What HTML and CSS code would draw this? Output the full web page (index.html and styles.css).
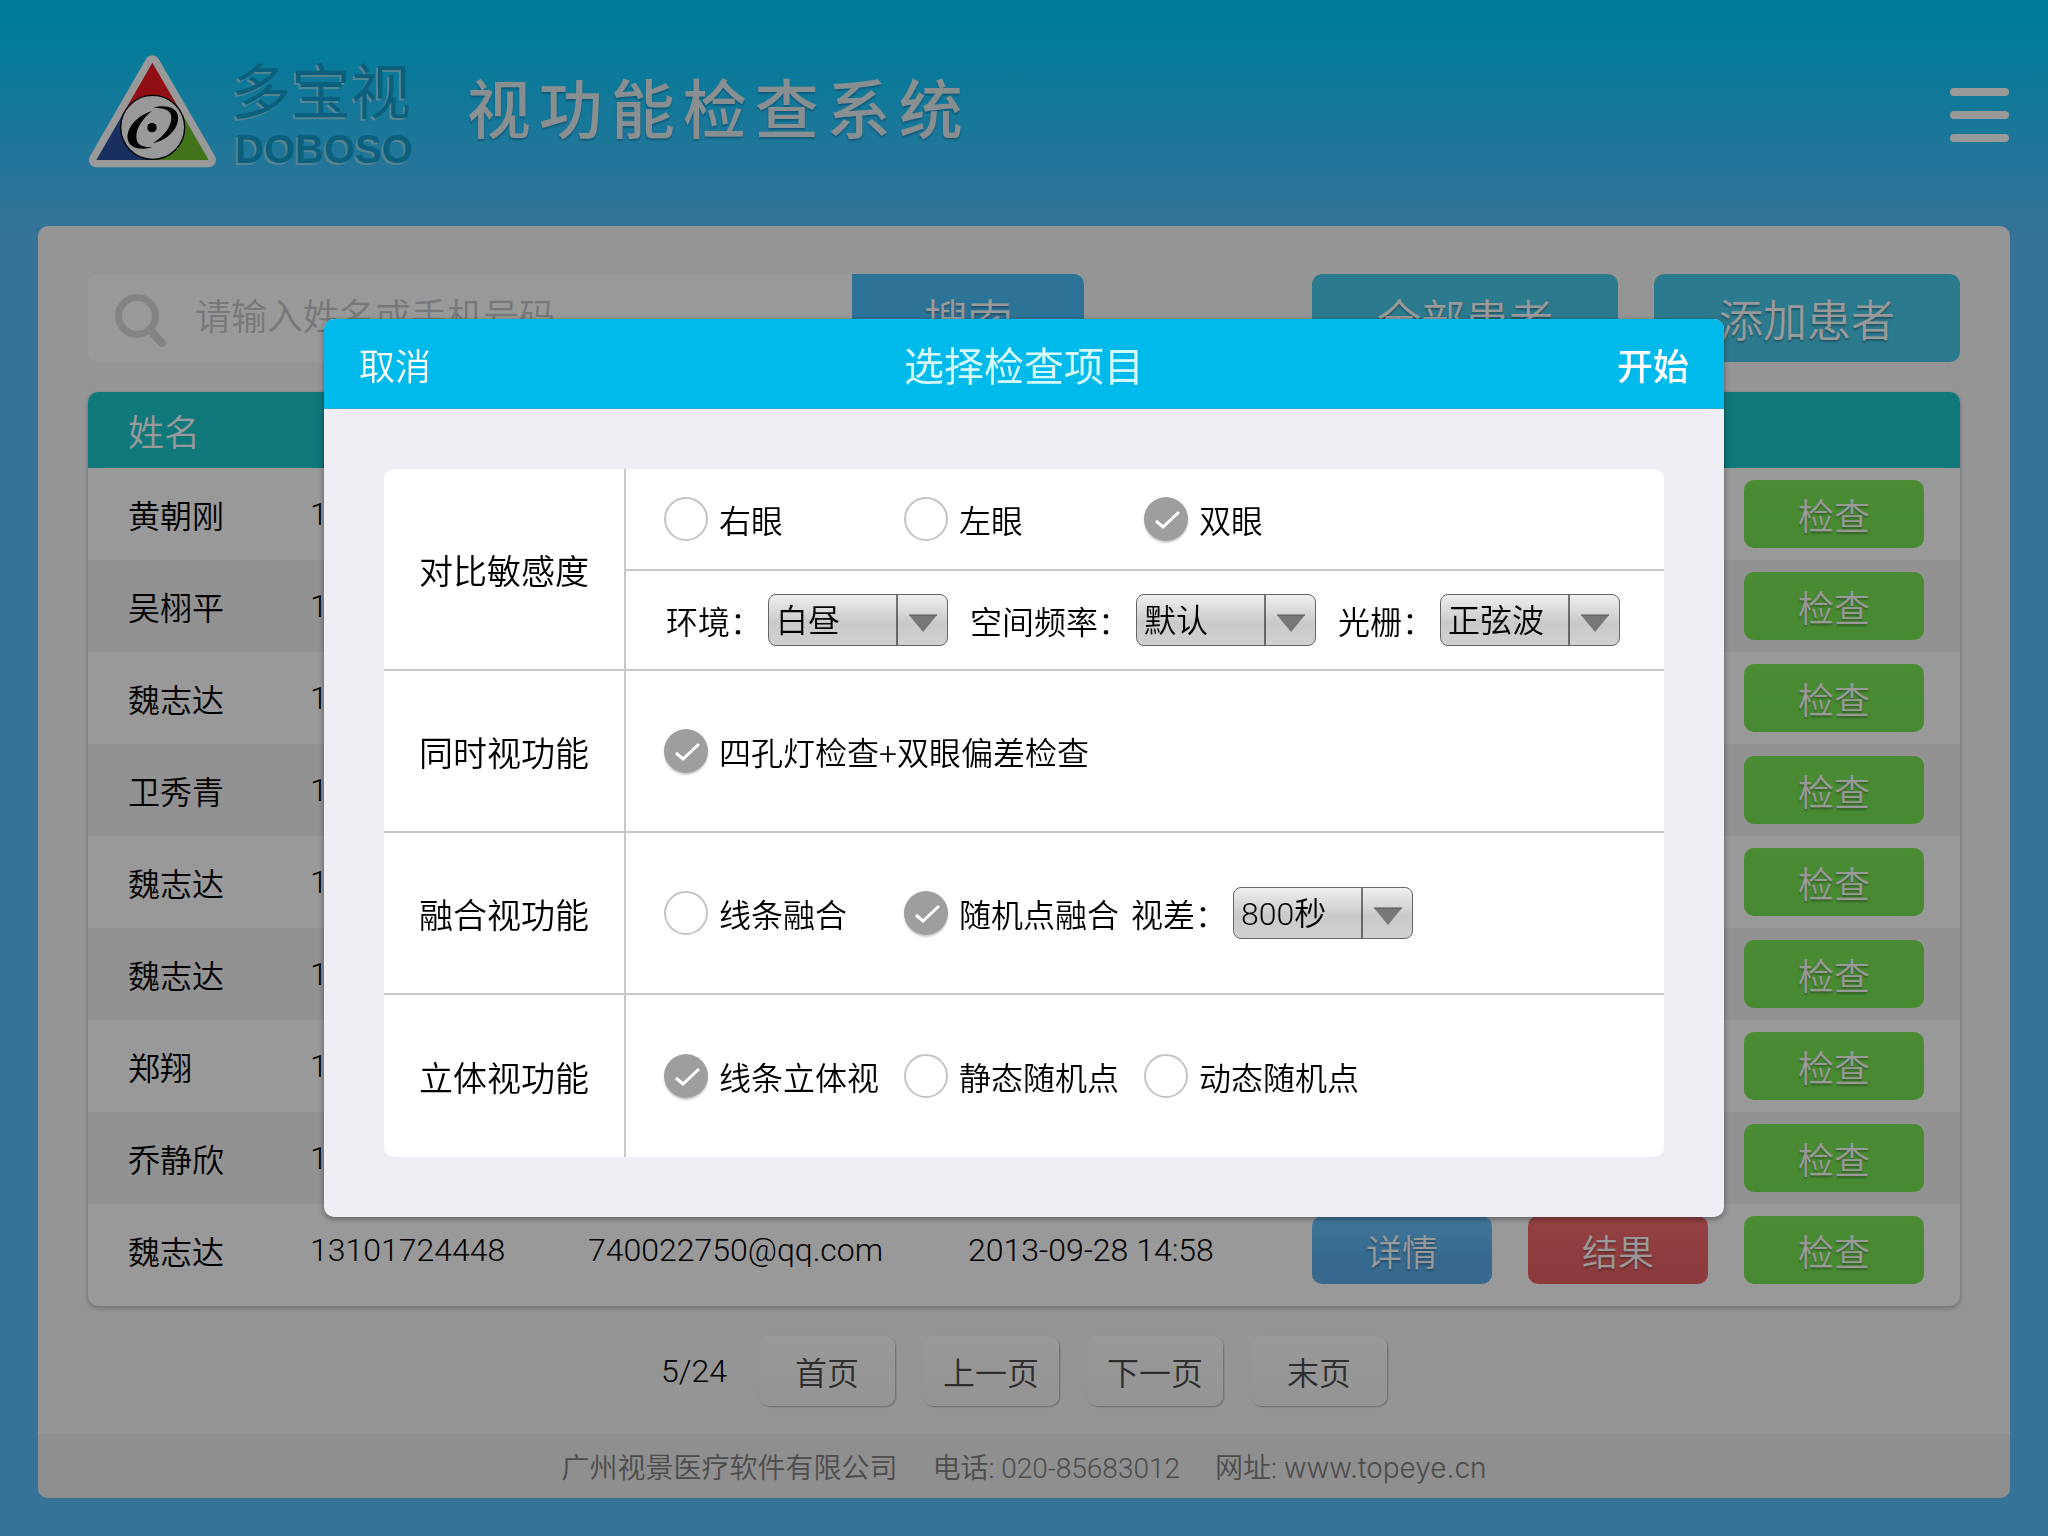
FILE: index.html
```html
<!DOCTYPE html>
<html lang="zh-CN">
<head>
<meta charset="utf-8">
<meta name="viewport" content="width=device-width, initial-scale=1">
<title>视功能检查系统</title>
<link rel="stylesheet" href="styles.css">
</head>
<body>
<header class="header">
  <div class="brand">
    <svg class="brand-mark" viewBox="55 42 390 345" aria-hidden="true">
      <path d="M248 68 80 360H417Z" fill="#fff" stroke="#fff" stroke-width="44" stroke-linejoin="round"/>
      <path d="M248 68 160 221H337Z" fill="#ef1a22"/>
      <path d="M160 221 80 360H249V221Z" fill="#2a4f9e"/>
      <path d="M337 221 417 360H249V221Z" fill="#6fc02c"/>
      <circle cx="249" cy="262" r="96" fill="#fff" stroke="#000" stroke-width="4"/>
      <path d="M250 203C285 194 320 200 325 228C329 268 290 302 250 309C285 288 307 255 305 230C303 208 280 203 250 203Z"/>
      <path d="M246 214C205 226 170 262 174 296C178 326 215 331 250 322C220 322 202 318 200 292C199 264 222 232 246 214Z"/>
      <circle cx="247" cy="263" r="14"/>
    </svg>
    <div class="brand-name">
      <span class="brand-cn">多宝视</span>
      <span class="brand-en">DOBOSO</span>
    </div>
  </div>
  <h1 class="title">视功能检查系统</h1>
  <button class="menu" type="button" aria-label="菜单">
    <svg viewBox="0 0 60 54" width="60" height="54" fill="#fff"><rect width="59" height="8" rx="4"/><rect y="23" width="59" height="8" rx="4"/><rect y="46" width="59" height="8" rx="4"/></svg>
  </button>
</header>

<main class="panel">
  <div class="content">
    <div class="toolbar">
      <form class="search">
        <label class="search-box">
          <svg viewBox="0 0 52 54" width="52" height="54" fill="none" stroke="#dcdcdc"><circle cx="22" cy="22" r="18.500" stroke-width="7"/><path d="M36 37 47 49" stroke-width="8" stroke-linecap="round"/></svg>
          <input type="text" placeholder="请输入姓名或手机号码" aria-label="请输入姓名或手机号码">
        </label>
        <button class="search-go" type="button">搜索</button>
      </form>
      <div class="toolbar-actions">
        <button class="wide" type="button">全部患者</button>
        <button class="wide" type="button">添加患者</button>
      </div>
    </div>

    <table class="patients">
      <colgroup><col class="c-name"><col class="c-phone"><col class="c-mail"><col class="c-date"><col class="c-act"></colgroup>
      <thead><tr><th scope="col">姓名</th><th></th><th></th><th></th><th></th></tr></thead>
      <tbody>
        <tr><td>黄朝刚</td><td>13101724448</td><td></td><td></td><td><div class="acts"><button class="act check" type="button">检查</button></div></td></tr>
        <tr><td>吴栩平</td><td>13101724448</td><td></td><td></td><td><div class="acts"><button class="act check" type="button">检查</button></div></td></tr>
        <tr><td>魏志达</td><td>13101724448</td><td></td><td></td><td><div class="acts"><button class="act check" type="button">检查</button></div></td></tr>
        <tr><td>卫秀青</td><td>13101724448</td><td></td><td></td><td><div class="acts"><button class="act check" type="button">检查</button></div></td></tr>
        <tr><td>魏志达</td><td>13101724448</td><td></td><td></td><td><div class="acts"><button class="act check" type="button">检查</button></div></td></tr>
        <tr><td>魏志达</td><td>13101724448</td><td></td><td></td><td><div class="acts"><button class="act check" type="button">检查</button></div></td></tr>
        <tr><td>郑翔</td><td>13101724448</td><td></td><td></td><td><div class="acts"><button class="act check" type="button">检查</button></div></td></tr>
        <tr><td>乔静欣</td><td>13101724448</td><td></td><td></td><td><div class="acts"><button class="act check" type="button">检查</button></div></td></tr>
        <tr><td>魏志达</td><td>13101724448</td><td>740022750@qq.com</td><td>2013-09-28 14:58</td><td><div class="acts"><button class="act detail" type="button">详情</button><button class="act result" type="button">结果</button><button class="act check" type="button">检查</button></div></td></tr>
      </tbody>
    </table>

    <nav class="pager" aria-label="分页">
      <span>5/24</span>
      <button type="button">首页</button>
      <button type="button">上一页</button>
      <button type="button">下一页</button>
      <button type="button">末页</button>
    </nav>
  </div>
  <footer class="footer">
    <span>广州视景医疗软件有限公司</span>
    <span>电话: 020-85683012</span>
    <span>网址: <a href="#">www.topeye.cn</a></span>
  </footer>
</main>

<div class="overlay">
  <form class="dialog" role="dialog" aria-modal="true" aria-labelledby="dialog-title">
    <div class="dialog-head">
      <button class="cancel" type="button">取消</button>
      <h2 id="dialog-title">选择检查项目</h2>
      <button class="start" type="button">开始</button>
    </div>
    <div class="dialog-body">
      <div class="items">
        <div class="item" role="group" aria-labelledby="g1">
          <div class="item-name" id="g1">对比敏感度</div>
          <div class="item-rows">
            <div class="line">
              <label class="opt"><input type="radio" name="eye">右眼</label>
              <label class="opt"><input type="radio" name="eye">左眼</label>
              <label class="opt"><input type="radio" name="eye" checked>双眼</label>
            </div>
            <div class="line fields">
              <label class="field">环境：<span class="pick"><select><option>白昼</option></select><svg viewBox="0 0 52 52"><path d="M1 1V51" stroke="#000"/><path d="M13 21H41L27 38Z" fill="#777"/><path d="M13 21H41" stroke="#555"/></svg></span></label>
              <label class="field">空间频率：<span class="pick"><select><option>默认</option></select><svg viewBox="0 0 52 52"><path d="M1 1V51" stroke="#000"/><path d="M13 21H41L27 38Z" fill="#777"/><path d="M13 21H41" stroke="#555"/></svg></span></label>
              <label class="field">光栅：<span class="pick"><select><option>正弦波</option></select><svg viewBox="0 0 52 52"><path d="M1 1V51" stroke="#000"/><path d="M13 21H41L27 38Z" fill="#777"/><path d="M13 21H41" stroke="#555"/></svg></span></label>
            </div>
          </div>
        </div>
        <div class="item" role="group" aria-labelledby="g2">
          <div class="item-name" id="g2">同时视功能</div>
          <div class="item-rows">
            <div class="line tall">
              <label class="opt"><input type="checkbox" checked>四孔灯检查+双眼偏差检查</label>
            </div>
          </div>
        </div>
        <div class="item" role="group" aria-labelledby="g3">
          <div class="item-name" id="g3">融合视功能</div>
          <div class="item-rows">
            <div class="line tall">
              <label class="opt"><input type="radio" name="fusion">线条融合</label>
              <label class="opt snug"><input type="radio" name="fusion" checked>随机点融合</label>
              <label class="field">视差：<span class="pick"><select><option>800秒</option></select><svg viewBox="0 0 52 52"><path d="M1 1V51" stroke="#000"/><path d="M13 21H41L27 38Z" fill="#777"/><path d="M13 21H41" stroke="#555"/></svg></span></label>
            </div>
          </div>
        </div>
        <div class="item" role="group" aria-labelledby="g4">
          <div class="item-name" id="g4">立体视功能</div>
          <div class="item-rows">
            <div class="line tall">
              <label class="opt"><input type="radio" name="stereo" checked>线条立体视</label>
              <label class="opt"><input type="radio" name="stereo">静态随机点</label>
              <label class="opt"><input type="radio" name="stereo">动态随机点</label>
            </div>
          </div>
        </div>
      </div>
    </div>
  </form>
</div>
</body>
</html>
```
FILE: styles.css
```css
* { box-sizing: border-box; }

body {
  margin: 0;
  min-height: 100vh;
  display: flex;
  flex-direction: column;
  padding: 0 38px 38px;
  background: #59c0ff linear-gradient(#00cfff 0, #03cdff 40px, #59c0ff 230px) no-repeat;
  font-family: Roboto, "Noto Sans CJK SC", sans-serif;
  font-size: 32px;
  font-weight: 350;
  color: #000;
}

button, input, select {
  font: inherit;
  color: inherit;
  margin: 0;
  padding: 0;
  border: 0;
  background: none;
}

h1, h2 { margin: 0; }
a { color: inherit; text-decoration: none; }

/* Header */
.header {
  display: flex;
  align-items: center;
  padding: 54px 0 57px 50px;
}
.brand { display: flex; align-items: flex-end; gap: 13px; }
.brand-mark { display: block; width: 130px; height: 115px; }
.brand-name {
  display: flex;
  flex-direction: column;
  gap: 5px;
  color: #12a0d0;
  text-shadow: -2px 2px 0 #8fdcf2;
}
.brand-cn { font-size: 60px; line-height: 60px; font-weight: 400; }
.brand-en {
  margin-left: 4px;
  font-family: "Liberation Sans", sans-serif;
  font-size: 40px;
  line-height: 40px;
  font-weight: 700;
}
.title {
  margin-left: 54px;
  font-size: 64px;
  line-height: 72px;
  font-weight: 500;
  letter-spacing: 8px;
  color: #e4eef2;
  text-shadow: 0 2px 2px rgba(0, 60, 110, .35);
}
.menu { margin-left: auto; padding-top: 6px; }
.menu svg { display: block; }

/* Main panel */
.panel {
  flex: 1;
  display: flex;
  flex-direction: column;
  border-radius: 10px;
  overflow: hidden;
  background: #f9f9f9;
}
.content {
  flex: 1;
  display: flex;
  flex-direction: column;
  gap: 30px;
  padding: 48px 50px 28px;
}
.toolbar { display: flex; justify-content: space-between; gap: 36px; }
.search { flex: 1; display: flex; max-width: 996px; }
.search-box {
  flex: 1;
  display: flex;
  align-items: center;
  gap: 28px;
  padding: 6px 0 0 27px;
  border-radius: 10px 0 0 10px;
  background: #fff;
}
.search-box input { flex: 1; min-width: 0; height: 82px; padding-bottom: 6px; font-size: 36px; outline: 0; }
.search-box input::placeholder { color: #c6c8ce; opacity: 1; }
.search-go, .wide {
  height: 88px;
  font-size: 44px;
  color: #fff;
  text-shadow: 0 2px 2px rgba(0, 0, 0, .3);
}
.search-go { width: 232px; border-radius: 0 10px 10px 0; background: #4bc0fe; }
.toolbar-actions { display: flex; gap: 36px; }
.wide { width: 306px; border-radius: 10px; background: #4acbed; }

/* Patient list */
.patients {
  width: 100%;
  table-layout: fixed;
  border-spacing: 0;
  padding-bottom: 10px;
  border-radius: 10px;
  background: #fff;
  box-shadow: 0 2px 5px rgba(0, 0, 0, .25);
}
.c-name { width: 222px; }
.c-phone { width: 278px; }
.c-mail { width: 380px; }
.c-act { width: 648px; }
.patients th {
  height: 76px;
  padding: 0 0 0 40px;
  background: #1cc6cb;
  color: #fff;
  font-size: 36px;
  font-weight: 350;
  text-align: left;
}
.patients th:first-child { border-top-left-radius: 10px; }
.patients th:last-child { border-top-right-radius: 10px; }
.patients td { height: 92px; padding: 0; }
.patients td:first-child { padding-left: 40px; }
.patients tbody tr:nth-child(even) { background: #f3f3f3; }
.acts { display: flex; justify-content: flex-end; gap: 36px; padding-right: 36px; }
.act {
  width: 180px;
  height: 68px;
  border-radius: 10px;
  color: #fff;
  font-size: 36px;
  text-shadow: 0 2px 2px rgba(0, 0, 0, .3);
}
.check { background: linear-gradient(#7ce856, #77e453); }
.detail { background: linear-gradient(#6cc8ff, #5cb0ee 60%); }
.result { background: linear-gradient(#f66d6d, #e96165); }

/* Pager */
.pager { display: flex; justify-content: center; align-items: center; gap: 28px; }
.pager span { padding-right: 4px; }
.pager button {
  width: 136px;
  height: 70px;
  border-radius: 10px;
  background: linear-gradient(#fff, #f7f7f7);
  color: #4c4c4c;
  box-shadow: 1px 1px 2px rgba(0, 0, 0, .3);
}

/* Footer */
.footer {
  display: flex;
  justify-content: center;
  align-items: center;
  gap: 35px;
  height: 64px;
  background: #eee;
  color: #808080;
  font-size: 28px;
}
.footer a { font-family: "Inter", sans-serif; font-weight: 300; }

/* Dialog */
.overlay {
  position: fixed;
  inset: 0;
  display: flex;
  align-items: center;
  justify-content: center;
  background: rgba(0, 0, 0, .4);
}
.dialog {
  width: 1400px;
  max-width: 100%;
  border-radius: 10px;
  overflow: hidden;
  background: #efeef4;
  box-shadow: 0 2px 6px rgba(0, 0, 0, .4);
}
.dialog-head {
  display: grid;
  grid-template-columns: 1fr auto 1fr;
  align-items: center;
  height: 90px;
  padding: 0 35px;
  border-bottom: 1px solid #2fa5c9;
  background: #00baeb;
  color: #fff;
  font-size: 36px;
}
.dialog-head h2 { font-size: 40px; font-weight: 400; color: #d4faff; }
.cancel { justify-self: start; }
.start { justify-self: end; font-weight: 500; }
.dialog-body { padding: 60px; }
.items { border-radius: 10px; overflow: hidden; background: #fff; }
.item { display: flex; }
.item + .item { border-top: 2px solid #c8c8c8; }
.item-name {
  width: 242px;
  display: flex;
  align-items: center;
  justify-content: center;
  border-right: 2px solid #c8c8c8;
  font-size: 34px;
}
.item-rows { flex: 1; }
.line { display: flex; align-items: center; height: 100px; padding-left: 38px; }
.line + .line { border-top: 2px solid #c8c8c8; }
.line.tall { height: 160px; }
.item:last-child .line { height: 162px; }
.line.fields { gap: 22px; padding-left: 40px; }
.opt {
  display: flex;
  align-items: center;
  gap: 11px;
  min-width: 240px;
  white-space: nowrap;
}
.opt.snug { min-width: 0; margin-right: 12px; }
.opt input {
  appearance: none;
  width: 44px;
  height: 44px;
  border: 2px solid #c4c4c4;
  border-radius: 50%;
  background: #fff;
}
.opt input:checked {
  border: 0;
  background: #9e9e9e url("data:image/svg+xml,%3Csvg xmlns='http://www.w3.org/2000/svg' viewBox='0 0 44 44'%3E%3Cpath d='M12 24 19 30 35 15' fill='none' stroke='%23fff' stroke-width='3'/%3E%3C/svg%3E");
  box-shadow: 0 2px 2px rgba(0, 0, 0, .2);
}
.field { display: flex; align-items: center; gap: 6px; white-space: nowrap; }
.pick { display: grid; width: 180px; }
.pick select {
  grid-area: 1 / 1;
  appearance: none;
  height: 52px;
  padding: 2px 0 0 7px;
  border: 1px solid #666;
  border-radius: 8px;
  background: linear-gradient(#efefef, #cacaca 55%, #d0d0d0);
}
.pick svg {
  grid-area: 1 / 1;
  justify-self: end;
  width: 52px;
  height: 52px;
  pointer-events: none;
}
```
